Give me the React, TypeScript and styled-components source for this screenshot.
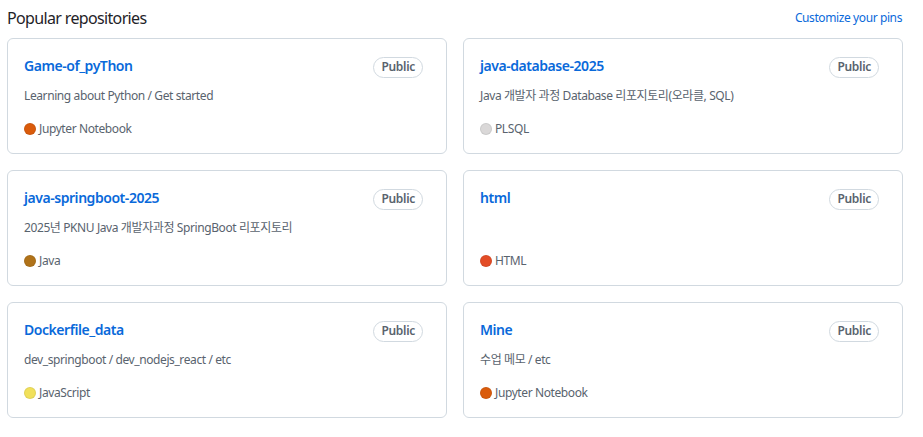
import React from "react";
import styled, { createGlobalStyle } from "styled-components";

const Global = createGlobalStyle`
  html, body { margin: 0; padding: 0; background: #ffffff; }
  body {
    font-family: "Noto Sans", "Noto Sans CJK KR", sans-serif;
    color: #1f2328;
  }
  * { box-sizing: border-box; }
`;

const Page = styled.div`
  width: 923px;
  padding: 6px 20px 0 7px;
`;

const Header = styled.div`
  display: flex;
  justify-content: space-between;
  align-items: center;
  height: 24px;
  margin-bottom: 8px;
`;

const Heading = styled.h2`
  margin: 0;
  font-size: 16px;
  font-weight: 400;
  line-height: 24px;
  letter-spacing: -0.65px;
  color: #1f2328;
`;

const Customize = styled.a`
  font-size: 12px;
  color: #0969da;
  text-decoration: none;
  line-height: 18px;
  letter-spacing: -0.4px;
  margin-right: 1px;
`;

const Grid = styled.ol`
  list-style: none;
  margin: 0;
  padding: 0;
  display: grid;
  grid-template-columns: 440px 440px;
  column-gap: 16px;
  row-gap: 16px;
`;

const Card = styled.li`
  height: 116px;
  border: 1px solid #d1d9e0;
  border-radius: 6px;
  padding: 16px;
  display: flex;
  flex-direction: column;
`;

const TopRow = styled.div`
  display: flex;
  align-items: center;
  justify-content: space-between;
  height: 24px;
  padding-right: 7px;
`;

const Title = styled.a`
  font-size: 14px;
  font-weight: 600;
  color: #0969da;
  text-decoration: none;
  line-height: 21px;
  letter-spacing: -0.45px;
  margin-bottom: 3px;
`;

const Badge = styled.span`
  display: inline-flex;
  align-items: center;
  height: 21px;
  padding: 0 7px;
  border: 1px solid #d1d9e0;
  border-radius: 11px;
  font-size: 12px;
  font-weight: 600;
  color: #59636e;
  line-height: 18px;
  letter-spacing: -0.3px;
`;

const Desc = styled.p`
  margin: 8px 0 0;
  font-size: 12px;
  line-height: 18px;
  height: 18px;
  color: #59636e;
  letter-spacing: -0.4px;
`;

const LangRow = styled.p`
  margin: auto 0 -1px;
  display: flex;
  align-items: center;
  font-size: 12px;
  line-height: 18px;
  color: #59636e;
  letter-spacing: -0.4px;
`;

const Dot = styled.span<{ $color: string }>`
  width: 12px;
  height: 12px;
  border-radius: 50%;
  background: ${(p) => p.$color};
  border: 1px solid rgba(31, 35, 40, 0.08);
  margin-right: 3px;
  flex-shrink: 0;
`;

type Repo = { name: string; desc: string; lang: string; color: string };

const repos: Repo[] = [
  { name: "Game-of_pyThon", desc: "Learning about Python / Get started", lang: "Jupyter Notebook", color: "#DA5B0B" },
  { name: "java-database-2025", desc: "Java 개발자 과정 Database 리포지토리(오라클, SQL)", lang: "PLSQL", color: "#dad8d8" },
  { name: "java-springboot-2025", desc: "2025년 PKNU Java 개발자과정 SpringBoot 리포지토리", lang: "Java", color: "#b07219" },
  { name: "html", desc: "", lang: "HTML", color: "#e34c26" },
  { name: "Dockerfile_data", desc: "dev_springboot / dev_nodejs_react / etc", lang: "JavaScript", color: "#f1e05a" },
  { name: "Mine", desc: "수업 메모 / etc", lang: "Jupyter Notebook", color: "#DA5B0B" },
];

export default function App() {
  return (
    <>
      <Global />
      <Page>
        <Header>
          <Heading>Popular repositories</Heading>
          <Customize href="#">Customize your pins</Customize>
        </Header>
        <Grid>
          {repos.map((r) => (
            <Card key={r.name}>
              <TopRow>
                <Title href="#">{r.name}</Title>
                <Badge>Public</Badge>
              </TopRow>
              <Desc>{r.desc}</Desc>
              <LangRow>
                <Dot $color={r.color} />
                <span>{r.lang}</span>
              </LangRow>
            </Card>
          ))}
        </Grid>
      </Page>
    </>
  );
}
